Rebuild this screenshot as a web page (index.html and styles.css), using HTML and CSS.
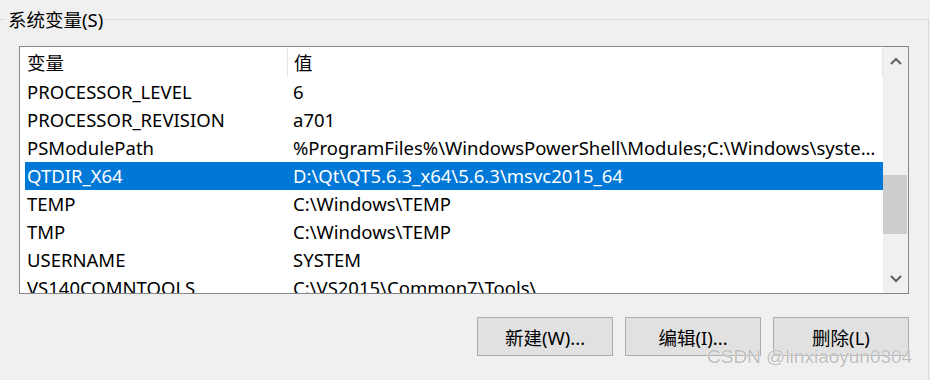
FILE: index.html
```html
<!DOCTYPE html>
<html lang="zh-CN">
<head>
    <meta charset="UTF-8">
    <title>系统变量</title>
    <link rel="stylesheet" href="styles.css">
</head>
<body>

    <div class="group">
        <div class="group-title">系统变量(S)</div>

        <!-- List view with header and scrollbar -->
        <div class="list">
            <div class="list-body">
                <div class="row header">
                    <div class="col-name">变量</div>
                    <div class="col-value">值</div>
                </div>
                <div class="row">
                    <div class="col-name">PROCESSOR_LEVEL</div>
                    <div class="col-value">6</div>
                </div>
                <div class="row">
                    <div class="col-name">PROCESSOR_REVISION</div>
                    <div class="col-value">a701</div>
                </div>
                <div class="row">
                    <div class="col-name">PSModulePath</div>
                    <div class="col-value">%ProgramFiles%\WindowsPowerShell\Modules;C:\Windows\system32\WindowsPowerShell\v1.0\Modules</div>
                </div>
                <div class="row selected">
                    <div class="col-name">QTDIR_X64</div>
                    <div class="col-value">D:\Qt\QT5.6.3_x64\5.6.3\msvc2015_64</div>
                </div>
                <div class="row">
                    <div class="col-name">TEMP</div>
                    <div class="col-value">C:\Windows\TEMP</div>
                </div>
                <div class="row">
                    <div class="col-name">TMP</div>
                    <div class="col-value">C:\Windows\TEMP</div>
                </div>
                <div class="row">
                    <div class="col-name">USERNAME</div>
                    <div class="col-value">SYSTEM</div>
                </div>
                <div class="row">
                    <div class="col-name">VS140COMNTOOLS</div>
                    <div class="col-value">C:\VS2015\Common7\Tools\</div>
                </div>
            </div>

            <div class="scrollbar">
                <div class="scroll-btn">
                    <svg width="12" height="8" viewBox="0 0 12 8"><path d="M1 7 L6 2 L11 7" fill="none" stroke="#606060" stroke-width="2"/></svg>
                </div>
                <div class="scroll-track">
                    <div class="scroll-thumb"></div>
                </div>
                <div class="scroll-btn">
                    <svg width="12" height="8" viewBox="0 0 12 8"><path d="M1 1 L6 6 L11 1" fill="none" stroke="#606060" stroke-width="2"/></svg>
                </div>
            </div>
        </div>

        <div class="buttons">
            <button class="btn">新建(W)...</button>
            <button class="btn">编辑(I)...</button>
            <button class="btn">删除(L)</button>
        </div>
    </div>

    <div class="watermark">CSDN @linxiaoyun0304</div>

</body>
</html>
```

FILE: styles.css
```css
/* General */
body {
    margin: 0;
    height: 380px;
    background-color: #f0f0f0;
    color: #000;
    font-family: "Noto Sans", "Noto Sans CJK SC", sans-serif;
    font-size: 18.5px;
    overflow: hidden;
}

/* Group box */
.group {
    margin-top: 19px;
    width: 928px;
    height: 361px;
    border-top: 1px solid #dcdcdc;
    border-right: 1px solid #dcdcdc;
}

.group-title {
    width: fit-content;
    margin: -12px 0 0 6px;
    padding: 0 2px;
    height: 24px;
    line-height: 24px;
    background-color: #f0f0f0;
}

/* List view */
.list {
    display: flex;
    margin: 14px 0 0 19px;
    width: 888px;
    height: 246px;
    border: 1px solid #828790;
    background-color: #fff;
}

.list-body {
    width: 858px;
    padding-left: 5px;
    overflow: hidden;
}

.row {
    display: flex;
    height: 28px;
    line-height: 28px;
    white-space: nowrap;
}

.row.header {
    height: 31px;
    line-height: 31px;
}

.col-name {
    width: 260px;
    padding-left: 2px;
    overflow: hidden;
}

.col-value {
    flex: 1;
    padding: 0 6px 0 6px;
    overflow: hidden;
    text-overflow: ellipsis;
}

.header .col-name,
.header .col-value {
    margin: 1px 0;
    line-height: 29px;
    border-right: 1px solid #e5e5e5;
}

.row.selected {
    background-color: #0078d7;
    color: #fff;
}

/* Scrollbar */
.scrollbar {
    width: 25px;
    display: flex;
    flex-direction: column;
    background-color: #f0f0f0;
}

.scroll-btn {
    height: 28px;
    display: flex;
    align-items: center;
    justify-content: center;
}

.scroll-track {
    flex: 1;
}

.scroll-thumb {
    margin: 100px 1px 0 0;
    height: 59px;
    background-color: #cdcdcd;
}

/* Buttons */
.buttons {
    display: flex;
    justify-content: flex-end;
    gap: 12px;
    margin: 23px 19px 0 0;
}

.btn {
    width: 136px;
    height: 39px;
    background-color: #e1e1e1;
    border: 1px solid #adadad;
    font-family: "Noto Sans", "Noto Sans CJK SC", sans-serif;
    font-size: 18.5px;
    color: #000;
    padding: 0;
}

/* Watermark overlay */
.watermark {
    position: absolute;
    left: 707px;
    top: 346px;
    font-family: "Liberation Sans", sans-serif;
    font-size: 19px;
    color: rgba(160, 160, 160, 0.7);
    text-shadow: 0 0 1px #fff, 0 0 1px #fff;
}
```
